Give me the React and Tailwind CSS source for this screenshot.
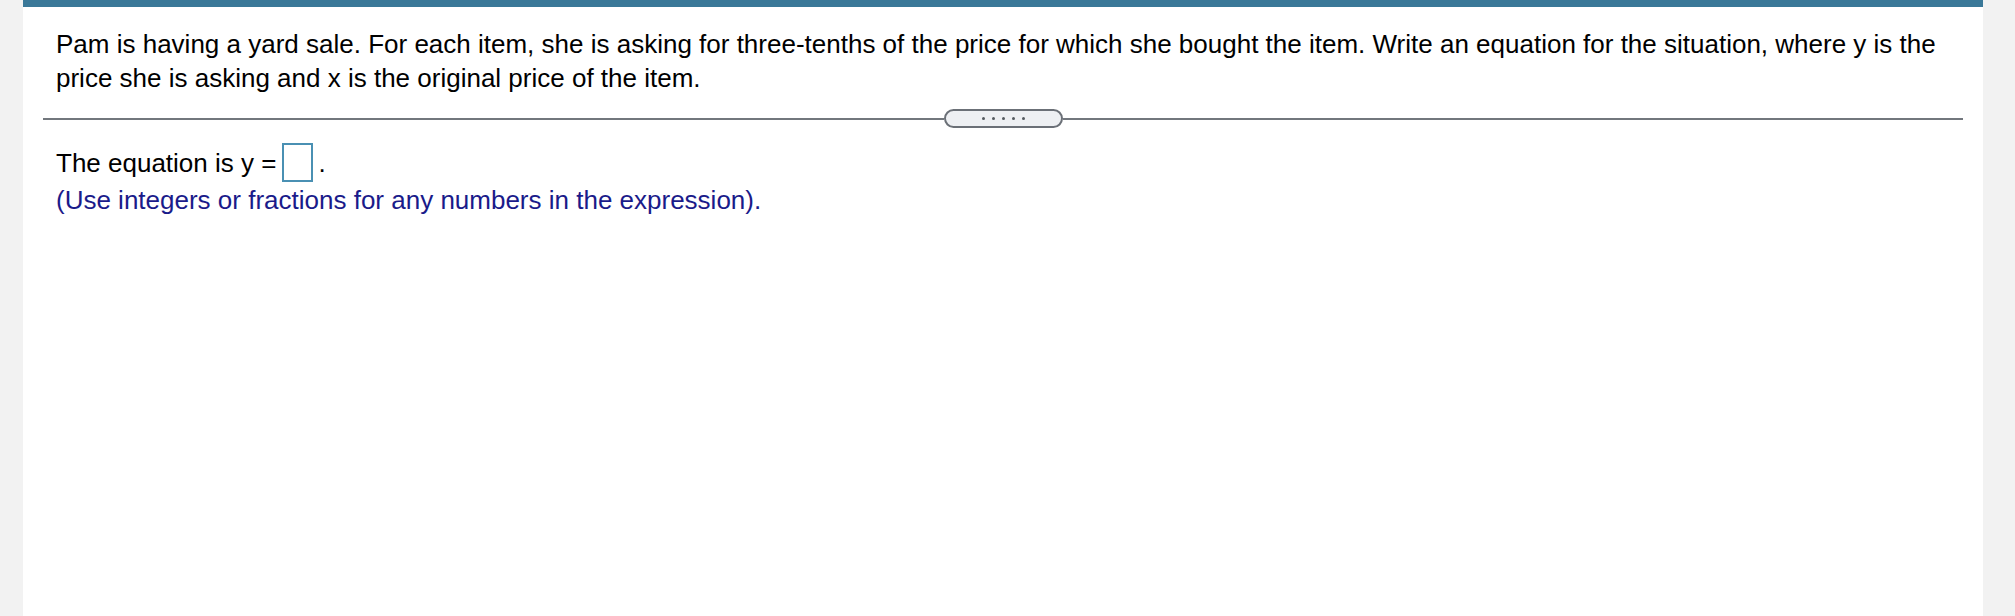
export default function App() {
  const dots = [0, 1, 2, 3, 4];

  return (
    <div className="min-h-screen bg-[#f2f2f2] pl-[23px] pr-[32px] font-['Liberation_Sans',Arial,sans-serif]">
      <div className="bg-white min-h-[616px]">
        <div className="h-[7px] bg-[#3a7898]" />

        <p className="pt-[20px] pl-[33px] pr-[18px] text-[26px] leading-[34px] text-black">
          Pam is having a yard sale. For each item, she is asking for three-tenths of the price for which she bought the item. Write an equation for the situation, where y is the price she is asking and x is the original price of the item.
        </p>

        <div className="mt-[14px] px-[20px] flex items-center">
          <div className="flex-1 h-[2px] bg-[#72777d]" />
          <button className="w-[119px] h-[19px] rounded-full border-2 border-[#6b7077] bg-[#eef0f3] flex items-center justify-center gap-[7px]">
            {dots.map((d) => (
              <span key={d} className="w-[3px] h-[3px] rounded-full bg-[#555a60]" />
            ))}
          </button>
          <div className="flex-1 h-[2px] bg-[#72777d]" />
        </div>

        <div className="mt-[15px] pl-[33px] flex items-center h-[39px] text-[26px] leading-[26px] text-black">
          <span>The equation is y =</span>
          <span className="ml-[6px] w-[31px] h-[39px] border-2 border-[#4a90b3] bg-white" />
          <span className="ml-[5px]">.</span>
        </div>

        <p className="mt-[2px] pl-[33px] text-[26px] leading-[32px] text-[#1a1b8a]">
          (Use integers or fractions for any numbers in the expression).
        </p>
      </div>
    </div>
  );
}
